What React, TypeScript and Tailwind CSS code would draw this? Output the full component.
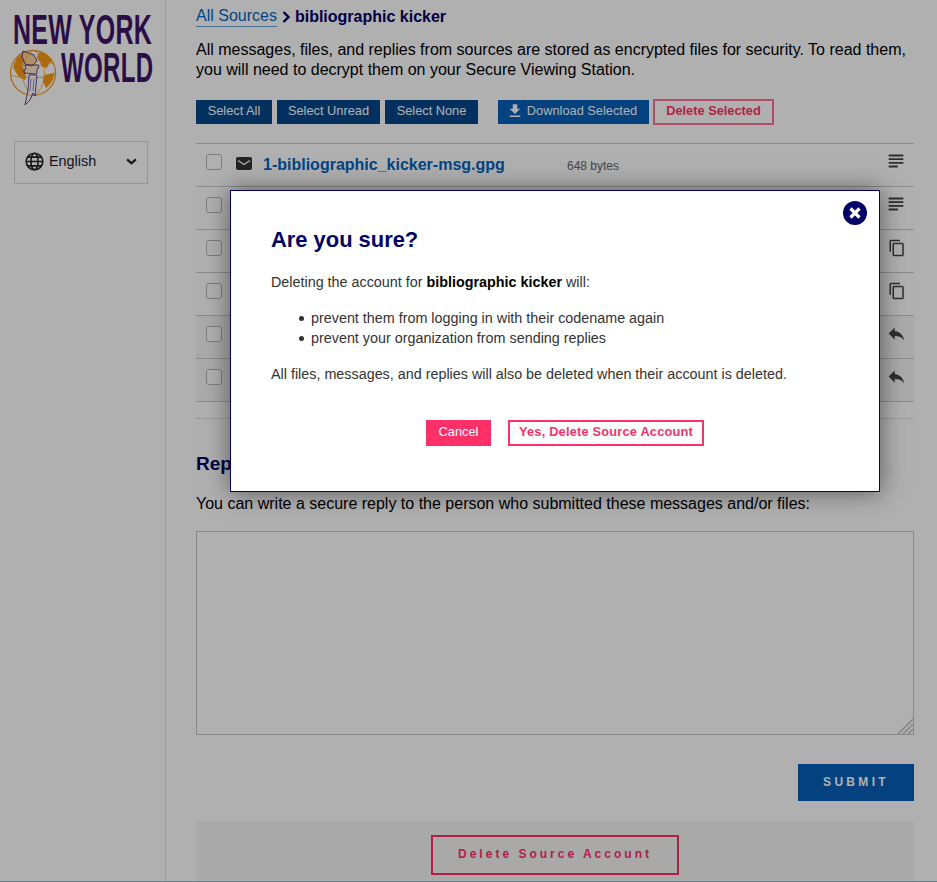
const subject = "M14 17H4v2h10v-2zm6-8H4v2h16V9zM4 15h16v-2H4v2zM4 5v2h16V5H4z";
const copy = "M16 1H4c-1.1 0-2 .9-2 2v14h2V3h12V1zm3 4H8c-1.1 0-2 .9-2 2v14c0 1.1.9 2 2 2h11c1.1 0 2-.9 2-2V7c0-1.1-.9-2-2-2zm0 16H8V7h11v14z";
const reply = "M10 9V5l-7 7 7 7v-4.1c5 0 8.5 1.6 11 5.1-1-5-4-10-11-11z";

const rows = [
  { name: "1-bibliographic_kicker-msg.gpg", size: "648 bytes", icon: subject, iconClass: "mb-[8px] h-[22px] w-[22px]", dim: false },
  { name: "2-bibliographic_kicker-msg.gpg", size: "648 bytes", icon: subject, iconClass: "mb-[8px] h-[22px] w-[22px]", dim: false },
  { name: "3-bibliographic_kicker-doc.gz.gpg", size: "1 KB", icon: copy, iconClass: "mb-[6px] mr-[1px] h-[18px] w-[18px]", dim: false },
  { name: "4-bibliographic_kicker-doc.gz.gpg", size: "1 KB", icon: copy, iconClass: "mb-[6px] mr-[1px] h-[18px] w-[18px]", dim: false },
  { name: "5-bibliographic_kicker-reply.gpg", size: "1 KB", icon: reply, iconClass: "mb-[6px] h-[21px] w-[21px]", dim: true },
  { name: "6-bibliographic_kicker-reply.gpg", size: "1 KB", icon: reply, iconClass: "mb-[6px] h-[21px] w-[21px]", dim: true },
];

function Glyph({ d, className }: { d: string; className: string }) {
  return (
    <svg viewBox="0 0 24 24" fill="currentColor" className={className}>
      <path d={d} />
    </svg>
  );
}

function Logo() {
  return (
    <div className="relative h-[108px] w-[165px] font-['Liberation_Sans',sans-serif] font-bold text-[#3e1666]">
      <div className="absolute left-[13px] top-[6px] origin-top-left scale-x-[0.58] whitespace-nowrap text-[43px] leading-[46px] tracking-[0.5px]">
        NEW YORK
      </div>
      <div className="absolute left-[61px] top-[44px] origin-top-left scale-x-[0.56] whitespace-nowrap text-[43px] leading-[46px] tracking-[0.5px]">
        WORLD
      </div>
      <svg viewBox="0 0 60 65" className="absolute left-[5px] top-[45px] h-[65px] w-[60px]">
        <circle cx="28" cy="28" r="22.5" fill="none" stroke="#fb9a14" strokeWidth="1.3" />
        <path d="M6 30c10 4 34 4 44-1M8 18c10 3 30 3 40 0M27 6c-13 12-13 32 0 44M30 6c12 10 13 30 1 44" fill="none" stroke="#fb9a14" strokeWidth="0.7" />
        <path d="M35 7c6 1 10 4 13 9l-4 2-2 5-5-1-2-5-3-4 1-4zM39 30l10-2c0 6-3 11-8 15l-3-6zM8 22l4-9 5-4 2 7-2 5 3 5 1 6-1 3-6-3-4-6z" fill="#fb9a14" />
        <path d="M18 6l11 4 3 6-5 5-7-2-3-7z" fill="#fb9a14" fillOpacity="0.45" stroke="#54308c" strokeWidth="0.9" />
        <path d="M20 20h13l1 3-2 1v4l-1 1-12-1v-3l2-1-1-3z" fill="#fb9a14" fillOpacity="0.25" stroke="#54308c" strokeWidth="0.9" />
        <path d="M24 30h8l-1 10-1 11-2-3-3 7-5 5 3-15z" fill="#ffffff" fillOpacity="0.5" stroke="#54308c" strokeWidth="0.9" />
        <path d="M26 34l-1 12M29 34l-1 12" stroke="#54308c" strokeWidth="0.6" />
      </svg>
    </div>
  );
}

function Row({ name, size, icon, iconClass, dim }: (typeof rows)[number]) {
  return (
    <div className={`flex h-[43px] items-center border-t border-[#cbcbcb] pb-[1px] pl-[10px] pr-[7px] ${dim ? "bg-[#f6f6f6]" : ""}`}>
      <span className="mb-[6px] h-4 w-4 shrink-0 rounded-[3px] border border-[#b4b4b4] bg-white" />
      <svg viewBox="0 0 16 13" className="mb-[2px] ml-[14px] h-[13px] w-[16px] shrink-0">
        <rect width="16" height="13" rx="2" fill="#333" />
        <path d="M2 3.5l6 4 6-4" fill="none" stroke="white" strokeWidth="1.4" />
      </svg>
      <span className="ml-[11px] w-[304px] shrink-0 text-[16px] font-bold text-[#0065c1]">{name}</span>
      <span className="mt-[2px] text-[12px] text-[#666]">{size}</span>
      <Glyph d={icon} className={`ml-auto text-[#444] ${iconClass}`} />
    </div>
  );
}

export default function App() {
  return (
    <div className="relative h-[882px] overflow-hidden bg-white font-['Liberation_Sans',sans-serif] text-black">
      <div className="flex h-[881px]">
        <aside className="w-[166px] shrink-0 border-r border-[#e3e3e3]">
          <Logo />
          <div className="ml-[14px] mt-[33px] flex h-[43px] w-[134px] items-center border border-[#d8d8d8] pb-[2px] pl-[10px] pr-[10px] text-[14.4px] text-[#222]">
            <svg viewBox="0 0 24 24" fill="none" stroke="#222" strokeWidth="2" className="h-[19px] w-[19px]">
              <circle cx="12" cy="12" r="10.5" />
              <ellipse cx="12" cy="12" rx="4.5" ry="10.5" />
              <path d="M1.5 12h21M3 6.5h18M3 17.5h18" />
            </svg>
            <span className="ml-[5px]">English</span>
            <svg viewBox="0 0 12 8" fill="none" stroke="#222" strokeWidth="2.6" className="ml-auto h-[7px] w-[11px]">
              <path d="M1 1.5l5 4.5 5-4.5" />
            </svg>
          </div>
        </aside>

        <main className="w-[748px] pl-[30px]">
          <div className="flex items-center pt-[6px] text-[16px] leading-[19px]">
            <span className="border-b border-[#0065c1]/60 pb-[1px] text-[#0065c1]">All Sources</span>
            <svg viewBox="0 0 8 12" fill="none" stroke="#000066" strokeWidth="2.4" className="mx-[5px] h-[12px] w-[8px]">
              <path d="M1.5 1l5 5-5 5" />
            </svg>
            <span className="font-bold text-[#000066]">bibliographic kicker</span>
          </div>
          <p className="mt-[13px] text-[16px] leading-[20px]">
            All messages, files, and replies from sources are stored as encrypted files for security. To read them, you will need to decrypt them on your Secure Viewing Station.
          </p>

          <div className="mt-[19px] flex h-[26px] items-center text-[12.8px] text-white">
            <button className="h-[24px] w-[76px] bg-[#03478c] pb-[3px]">Select All</button>
            <button className="ml-[5px] h-[24px] w-[103px] bg-[#03478c] pb-[3px]">Select Unread</button>
            <button className="ml-[5px] h-[24px] w-[93px] bg-[#03478c] pb-[3px]">Select None</button>
            <button className="ml-[20px] flex h-[24px] w-[151px] items-center justify-center bg-[#0560b8] pb-[3px] pr-[4px]">
              <svg viewBox="0 0 24 24" fill="currentColor" className="mr-[3px] h-[18px] w-[18px]">
                <path d="M19 9h-4V3H9v6H5l7 7 7-7zM5 18v2h14v-2H5z" />
              </svg>
              Download Selected
            </button>
            <button className="ml-[4px] h-[26px] w-[121px] border-2 border-[#ff6f98] bg-white pb-[3px] font-bold text-[#ff3366]">Delete Selected</button>
          </div>

          <div className="mt-[18px]">
            {rows.map((row) => (
              <Row key={row.name} {...row} />
            ))}
          </div>
          <div className="border-t border-[#cbcbcb] pt-[16px]">
            <div className="border-t border-dotted border-[#c4c4c4]" />
          </div>

          <h2 className="mt-[33px] text-[19px] font-bold leading-[24px] text-[#000066]">Reply</h2>
          <p className="mt-[18px] text-[16px] leading-[20px]">
            You can write a secure reply to the person who submitted these messages and/or files:
          </p>
          <div className="relative mt-[17px] h-[204px] w-[718px]">
            <textarea className="block h-full w-full resize-none border border-[#c5c5c5] bg-white" />
            <svg viewBox="0 0 15 15" className="absolute bottom-px right-px h-[15px] w-[15px]">
              <path d="M0 15L15 0M5 15L15 5M10 15L15 10" stroke="#bbb" strokeWidth="1.4" />
            </svg>
          </div>
          <div className="mt-[29px] flex justify-end">
            <button className="h-[37px] w-[116px] bg-[#0560b8] pb-[2px] text-[12px] font-bold tracking-[3.3px] text-white">SUBMIT</button>
          </div>
          <div className="mt-[20px] flex h-[60px] justify-center bg-[#f5f5f5] pt-[14px]">
            <button className="h-[40px] w-[248px] border-2 border-[#ff2e66] pb-[2px] text-[12px] font-bold tracking-[3px] text-[#ff2e66]">
              Delete Source Account
            </button>
          </div>
        </main>
      </div>
      <div className="h-px bg-[#88b4ee]" />

      <div className="absolute inset-0 bg-black/[0.31]">
        <div className="absolute left-[230px] top-[190px] h-[302px] w-[650px] border border-[#000066] bg-white pl-[40px] pt-[36px] text-[14.35px] leading-[20px] text-[#333] shadow-[0_0_24px_rgba(0,0,0,0.5)]">
          <button className="absolute right-[12px] top-[10px] flex h-[24px] w-[24px] items-center justify-center rounded-full bg-[#000066]">
            <svg viewBox="0 0 12 12" stroke="white" strokeWidth="3.2" className="h-[12px] w-[12px]">
              <path d="M1.5 1.5l9 9M10.5 1.5l-9 9" />
            </svg>
          </button>
          <h1 className="text-[21.9px] font-bold leading-[26px] text-[#000066]">Are you sure?</h1>
          <p className="mt-[19px]">
            Deleting the account for <strong className="text-black">bibliographic kicker</strong> will:
          </p>
          <ul className="mt-[16px] pl-[28px]">
            <li className="flex items-center">
              <span className="mr-[7px] h-[5px] w-[5px] rounded-full bg-[#333]" />
              prevent them from logging in with their codename again
            </li>
            <li className="flex items-center">
              <span className="mr-[7px] h-[5px] w-[5px] rounded-full bg-[#333]" />
              prevent your organization from sending replies
            </li>
          </ul>
          <p className="mt-[16px]">All files, messages, and replies will also be deleted when their account is deleted.</p>
          <div className="mt-[36px] flex pl-[155px] text-[12.8px]">
            <button className="h-[26px] w-[65px] bg-[#ff3068] pb-[3px] text-white">Cancel</button>
            <button className="ml-[17px] h-[26px] w-[196px] border-2 border-[#ff3068] pb-[3px] font-bold tracking-[0.2px] text-[#ff3068]">Yes, Delete Source Account</button>
          </div>
        </div>
      </div>
    </div>
  );
}
